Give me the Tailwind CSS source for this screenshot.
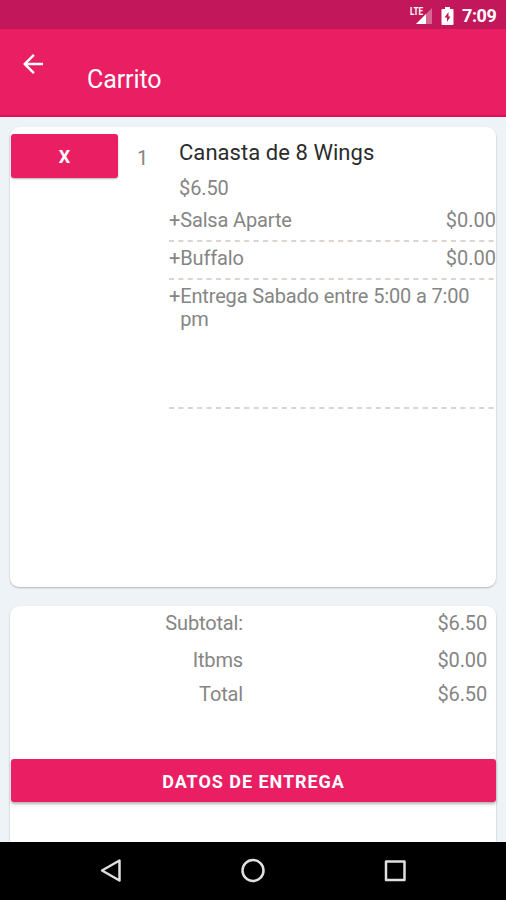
<!DOCTYPE html>
<html lang="es">
<head>
    <meta charset="UTF-8">
    <meta name="viewport" content="width=device-width, initial-scale=1.0">
    <title>Carrito</title>
    <script src="https://cdn.jsdelivr.net/npm/@tailwindcss/browser@4"></script>
</head>
<body class="bg-[#eef3f7] font-['Roboto',sans-serif] h-[900px] flex flex-col overflow-hidden text-[#858585]">

    <!-- Status bar -->
    <div class="h-[29px] shrink-0 bg-[#c2185b] flex items-center justify-end pr-[10px] text-white">
        <svg class="w-[24px] h-[20px] mr-[8px]" viewBox="0 0 24 20">
            <path d="M23 3V19H7Z" fill="#fff" fill-opacity=".35"/>
            <path d="M17 9V19H7Z" fill="#fff"/>
            <text x="1" y="9.500" font-size="11" font-weight="700" textLength="13" lengthAdjust="spacingAndGlyphs" fill="#fff">LTE</text>
        </svg>
        <svg class="w-[13px] h-[18px] mr-[8px] mt-[2px]" viewBox="0 0 13 18">
            <path d="M4 0H9V2H11.500Q12.500 2 12.500 3V17Q12.500 18 11.500 18H1.500Q.5 18 .5 17V3Q.5 2 1.500 2H4Z" fill="#fff"/>
            <path d="M7.500 5L3.500 10.500H6V15L9.500 9.500H7.500Z" fill="#c2185b"/>
        </svg>
        <span class="text-[18px] leading-[20px] font-bold mt-[3px] w-[34px] whitespace-nowrap tracking-[-0.4px]">7:09</span>
    </div>

    <!-- Toolbar -->
    <div class="h-[88px] shrink-0 bg-[#e91e63] border-b-2 border-[#dc1054] flex text-white">
        <svg class="w-[30px] h-[30px] ml-[18px] mt-[20px]" viewBox="0 0 24 24" fill="#fff">
            <path d="M20 11H7.830l5.590-5.590L12 4l-8 8 8 8 1.410-1.410L7.830 13H20v-2z"/>
        </svg>
        <h1 class="ml-[39px] mt-[36px] text-[25px] leading-[30px] tracking-[-0.1px]">Carrito</h1>
    </div>

    <!-- Cart item -->
    <div class="mt-[10px] mx-[10px] h-[460px] shrink-0 bg-white rounded-[9px] shadow-[0_1px_2px_rgba(0,0,0,0.25)] flex">
        <button class="mt-[7px] ml-px w-[107px] h-[44px] shrink-0 rounded-[3px] bg-[#e91e63] shadow-[0_1px_2px_rgba(0,0,0,0.3)] text-white text-[18px] font-bold">X</button>
        <div class="w-[51px] shrink-0 pl-[19px] pt-[20px] text-[20px] leading-[23px]">1</div>
        <div class="flex-1 pt-[13px] text-[20px] leading-[23px]">
            <h2 class="pl-[10px] text-[22px] leading-[26px] tracking-[0.05px] text-[#2b2b2b]">Canasta de 8 Wings</h2>
            <p class="pl-[10px] mt-[11px] tracking-[-0.1px]">$6.50</p>
            <div class="mt-[9px] h-[33px] flex flex-col justify-between">
                <div class="flex justify-between"><span class="tracking-[-0.15px]">+Salsa Aparte</span><span>$0.00</span></div>
                <svg class="w-[325px] h-[2px]"><line x1="0" y1="1" x2="325" y2="1" stroke="#dcd5cf" stroke-width="2" stroke-dasharray="5 4.400"/></svg>
            </div>
            <div class="mt-[5px] h-[33px] flex flex-col justify-between">
                <div class="flex justify-between"><span class="tracking-[-0.15px]">+Buffalo</span><span>$0.00</span></div>
                <svg class="w-[325px] h-[2px]"><line x1="0" y1="1" x2="325" y2="1" stroke="#dcd5cf" stroke-width="2" stroke-dasharray="5 4.400"/></svg>
            </div>
            <div class="mt-[5px] h-[124px] flex flex-col justify-between">
                <div class="flex tracking-[-0.15px]"><span>+</span><span>Entrega Sabado entre 5:00 a 7:00<br>pm</span></div>
                <svg class="w-[325px] h-[2px]"><line x1="0" y1="1" x2="325" y2="1" stroke="#dcd5cf" stroke-width="2" stroke-dasharray="5 4.400"/></svg>
            </div>
        </div>
    </div>

    <!-- Totals -->
    <div class="mt-[19px] mx-[10px] h-[236px] shrink-0 bg-white rounded-t-[9px] shadow-[0_1px_2px_rgba(0,0,0,0.25)] text-[20px] leading-[23px] tracking-[-0.15px]">
        <div class="pt-[6px] flex justify-between pr-[9px]"><span class="w-[233px] text-right">Subtotal:</span><span>$6.50</span></div>
        <div class="mt-[14px] flex justify-between pr-[9px]"><span class="w-[233px] text-right">Itbms</span><span>$0.00</span></div>
        <div class="mt-[11px] flex justify-between pr-[9px]"><span class="w-[233px] text-right">Total</span><span>$6.50</span></div>
        <button class="block mt-[53px] ml-px w-[485px] h-[43px] pt-px rounded-[3px] bg-[#e91e63] shadow-[0_2px_3px_rgba(0,0,0,0.3)] text-white text-[18px] font-bold tracking-[0.95px]">DATOS DE ENTREGA</button>
    </div>

    <!-- Navigation bar -->
    <div class="h-[58px] shrink-0 bg-black flex items-center justify-between px-[98px]">
        <svg class="w-[26px] h-[26px]" viewBox="0 0 26 26" fill="none" stroke="#e0e0e0" stroke-width="2.500" stroke-linejoin="round"><path d="M21.500 2.500V22.500L4 12.500Z"/></svg>
        <svg class="w-[26px] h-[26px]" viewBox="0 0 26 26" fill="none" stroke="#e0e0e0" stroke-width="2.500"><circle cx="13" cy="12.500" r="10.500"/></svg>
        <svg class="w-[26px] h-[26px]" viewBox="0 0 26 26" fill="none" stroke="#e0e0e0" stroke-width="2.500" stroke-linejoin="round"><rect x="4" y="3.500" width="18.500" height="18.500"/></svg>
    </div>
</body>
</html>
